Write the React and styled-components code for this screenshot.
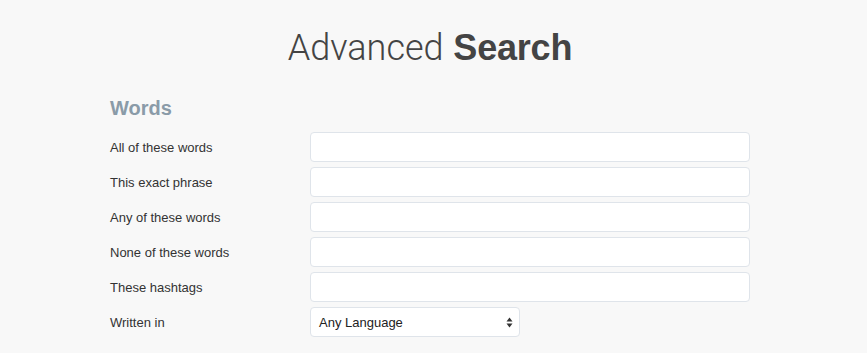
import React from "react";
import styled, { createGlobalStyle } from "styled-components";

const Global = createGlobalStyle`
  html, body { margin: 0; padding: 0; background: #f8f8f8; }
  body { font-family: "Liberation Sans", Arial, sans-serif; color: #333; }
`;

const Page = styled.div`
  width: 867px;
  height: 353px;
  background: #f8f8f8;
  overflow: hidden;
`;

const Container = styled.div`
  width: 640px;
  margin: 0 0 0 110px;
`;

const Title = styled.h1`
  margin: 0;
  padding-top: 26px;
  text-align: center;
  font-family: "Roboto", "Liberation Sans", sans-serif;
  font-size: 36px;
  line-height: 44px;
  font-weight: 300;
  color: #444;
  word-spacing: 1px;
  b {
    font-family: "Liberation Sans", Arial, sans-serif;
    font-weight: 700;
    letter-spacing: -0.2px;
  }
`;

const SectionTitle = styled.h2`
  margin: 26px 0 12px;
  font-size: 20px;
  line-height: 24px;
  font-weight: 700;
  color: #8a9ba8;
`;

const Rows = styled.div`
  display: grid;
  grid-template-columns: 200px 440px;
  row-gap: 5px;
  align-items: center;
`;

const Label = styled.label`
  font-size: 13px;
  color: #333;
`;

const Input = styled.input`
  box-sizing: border-box;
  width: 440px;
  height: 30px;
  border: 1px solid #dfe4ea;
  border-radius: 4px;
  background: #fff;
  margin: 0;
  outline: none;
`;

const SelectBox = styled.div`
  box-sizing: border-box;
  width: 210px;
  height: 30px;
  border: 1px solid #dfe4ea;
  border-radius: 4px;
  background: #fff;
  display: flex;
  align-items: center;
  justify-content: space-between;
  padding: 0 6px 0 8px;
  font-size: 13px;
  color: #222;
`;

const fields = [
  "All of these words",
  "This exact phrase",
  "Any of these words",
  "None of these words",
  "These hashtags",
];

export default function App() {
  return (
    <Page>
      <Global />
      <Container>
        <Title>
          Advanced <b>Search</b>
        </Title>
        <SectionTitle>Words</SectionTitle>
        <Rows>
          {fields.map((f) => (
            <React.Fragment key={f}>
              <Label>{f}</Label>
              <Input type="text" />
            </React.Fragment>
          ))}
          <Label>Written in</Label>
          <SelectBox>
            <span>Any Language</span>
            <svg width="7" height="11" viewBox="0 0 7 11">
              <path d="M3.5 0.5 L6.5 4.5 L0.5 4.5 Z" fill="#333" />
              <path d="M3.5 10.5 L6.5 6.5 L0.5 6.5 Z" fill="#333" />
            </svg>
          </SelectBox>
        </Rows>
      </Container>
    </Page>
  );
}
